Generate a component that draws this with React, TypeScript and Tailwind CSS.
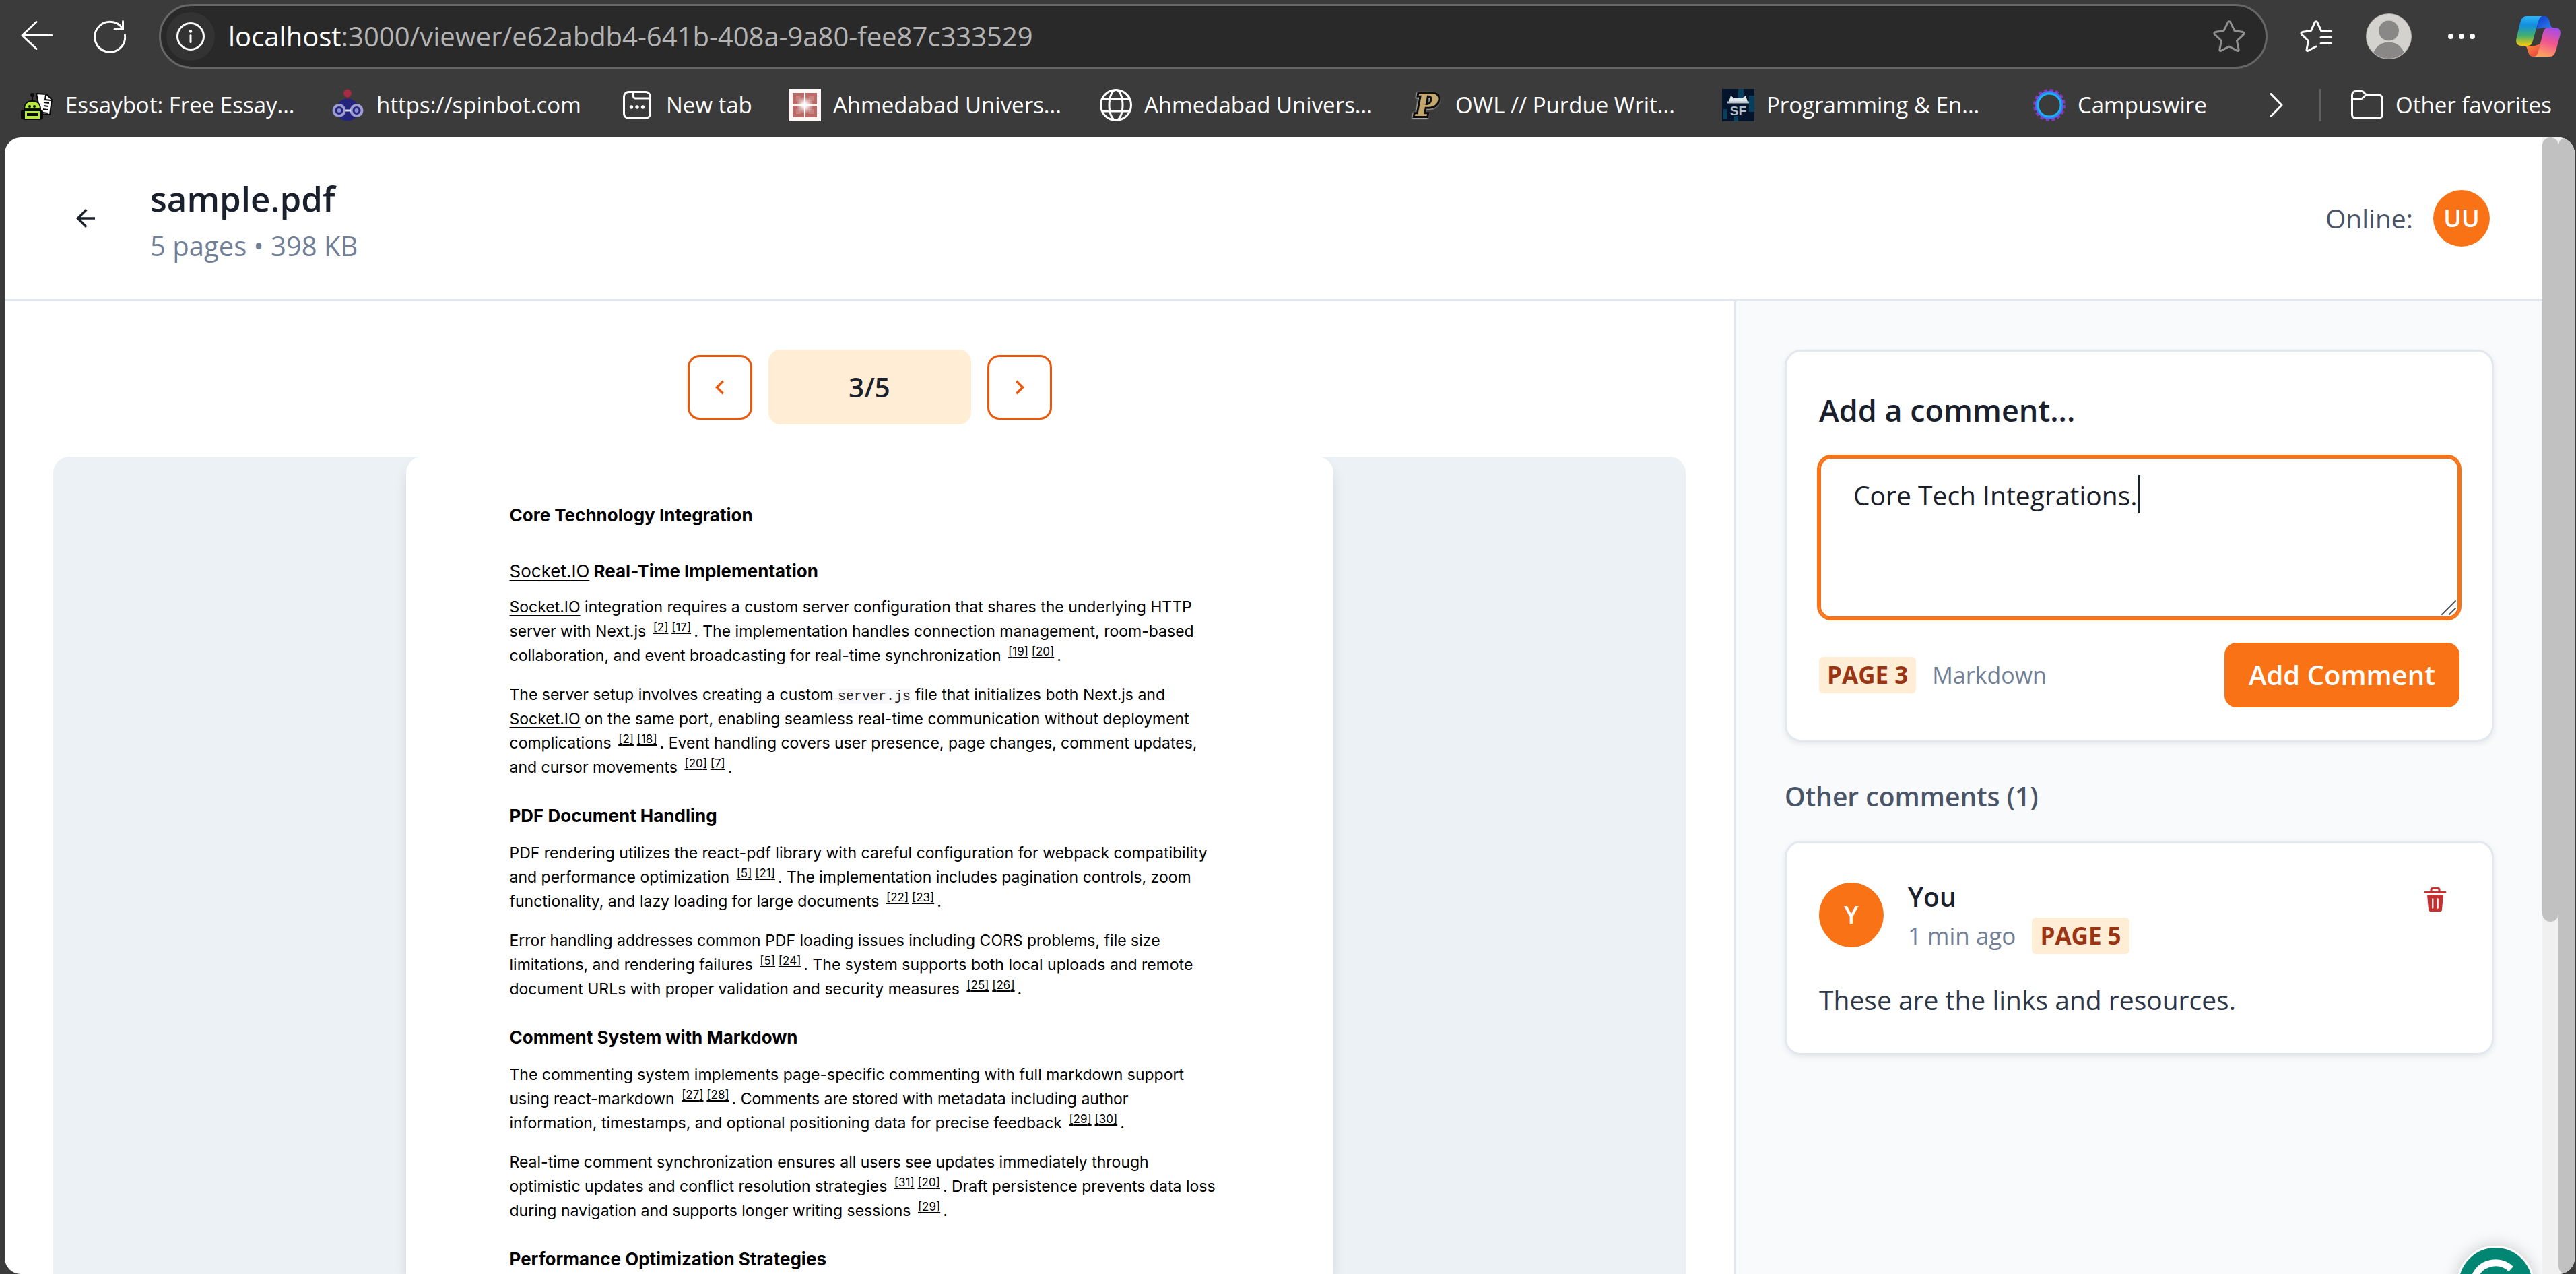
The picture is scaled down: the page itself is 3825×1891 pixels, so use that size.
import type { ReactNode } from "react";
import { MdArrowBack, MdChevronLeft, MdChevronRight } from "react-icons/md";

/* ---------- Browser toolbar icons ---------- */

const BackArrow = () => (
  <svg className="size-12" viewBox="0 0 48 48" fill="none" stroke="#fff" strokeWidth="3" strokeLinecap="round" strokeLinejoin="round">
    <path d="M46 22.5H2M23 2.5 2 22.5l21 20" />
  </svg>
);

const Reload = () => (
  <svg className="size-12" viewBox="0 0 48 48" fill="none" stroke="#fff" strokeWidth="3" strokeLinecap="round" strokeLinejoin="round">
    <path d="M46.500 22A22.500 22.500 0 1 1 43 12.500M43.500 1.500v12H31" />
  </svg>
);

const InfoIcon = () => (
  <svg className="size-[42px]" viewBox="0 0 42 42" fill="none" stroke="#fff" strokeWidth="3" strokeLinecap="round">
    <circle cx="21" cy="21" r="19.500" />
    <path d="M21 19.500v10" />
    <circle cx="21" cy="13.500" r="2.200" fill="#fff" stroke="none" />
  </svg>
);

const Star = () => (
  <svg className="size-12" viewBox="0 0 48 48" fill="none" stroke="#8f8f8f" strokeWidth="3" strokeLinejoin="round">
    <path d="M22.300 2.800a2 2 0 0 1 3.400 0l6.300 12.800 12.600 2a1.900 1.900 0 0 1 1 3.200L35.500 30.500l2.700 13.200a1.500 1.500 0 0 1-2.200 1.600L24 39l-12 6.300a1.500 1.500 0 0 1-2.200-1.600l2.700-13.200L2.400 20.800a1.900 1.900 0 0 1 1-3.200l12.600-2z" />
  </svg>
);

const FavoritesList = () => (
  <svg className="size-12" viewBox="0 0 48 48" fill="none" stroke="#fff" strokeWidth="3" strokeLinecap="round" strokeLinejoin="round">
    <path d="M46.500 16.500H32L25.700 2.800a2 2 0 0 0-3.400 0L16.500 15.600l-13 2a1.900 1.900 0 0 0-1 3.200L12.500 30.500 10 43.700a1.500 1.500 0 0 0 2.200 1.600L24 39M31 25.500h15.500M31 34.500h15.500" />
  </svg>
);

const Profile = () => (
  <svg className="size-[68px]" viewBox="0 0 68 68">
    <clipPath id="profile-clip">
      <circle cx="34" cy="34" r="33" />
    </clipPath>
    <circle cx="34" cy="34" r="34" fill="#b9b7b5" />
    <circle cx="34" cy="34" r="33" fill="#d4d2cf" />
    <circle cx="34" cy="25.500" r="15" fill="#8a8886" />
    <circle cx="34" cy="67" r="24.500" fill="#8a8886" clipPath="url(#profile-clip)" />
  </svg>
);

const Dots = () => (
  <svg className="h-3 w-10" viewBox="0 0 40 12" fill="#fff">
    <circle cx="4" cy="6" r="4" />
    <circle cx="20" cy="6" r="4" />
    <circle cx="36" cy="6" r="4" />
  </svg>
);

const Copilot = () => (
  <svg className="h-[60px] w-[66px]" viewBox="0 0 66 60">
    <defs>
      <linearGradient id="cp-a" x1="0" y1="0" x2="0" y2="1">
        <stop offset="0" stopColor="#2fb4f5" />
        <stop offset=".3" stopColor="#118ee0" />
        <stop offset=".65" stopColor="#3fae72" />
        <stop offset="1" stopColor="#fbcb05" />
      </linearGradient>
      <linearGradient id="cp-b" x1="0" y1="0" x2="1" y2="1">
        <stop offset="0" stopColor="#1138c9" />
        <stop offset="1" stopColor="#2d86f0" />
      </linearGradient>
      <linearGradient id="cp-c" x1=".7" y1="0" x2=".4" y2="1">
        <stop offset="0" stopColor="#a24dea" />
        <stop offset=".5" stopColor="#f1558f" />
        <stop offset="1" stopColor="#fda45c" />
      </linearGradient>
      <linearGradient id="cp-d" x1="0" y1="0" x2="1" y2="1">
        <stop offset="0" stopColor="#fd9a3e" />
        <stop offset="1" stopColor="#e8383f" />
      </linearGradient>
    </defs>
    <path d="M34 0h8c4 0 6 2 7.500 7l2 7c.7 2 2 3 4 3H40l-9 2z" fill="url(#cp-b)" />
    <path d="M32 60h-7c-4 0-6-3-7-7l-2-6c-.7-2-2-3-4-3h16l8-3z" fill="url(#cp-d)" />
    <path d="M16 0h24c-4 0-5.500 3-7 8l-8 28c-1.500 5-3 8-8 8H8c-6 0-9-4-7.500-11L6 10c2-7 5-10 10-10z" fill="url(#cp-a)" />
    <path d="M50 60H26c4 0 5.500-3 7-8l7-27c1.500-5 3-8 8-8h10c6 0 9 4 7.500 11l-6 22c-2 7-4.500 10-9.500 10z" fill="url(#cp-c)" />
  </svg>
);

/* ---------- Bookmark icons ---------- */

const Essaybot = () => (
  <svg className="size-12" viewBox="0 0 48 48">
    <path d="M23 7l15 1 8 8-3 22-14-1z" fill="#fff" stroke="#0b0b0b" strokeWidth="2" />
    <path d="M37 9l-1 7 9 1M34 20l8 1M34 25l7 1M33 30l7 1M33 35l7 1" stroke="#0b0b0b" strokeWidth="2" fill="none" />
    <path d="M17 10v9" stroke="#0b0b0b" strokeWidth="2" />
    <circle cx="17" cy="9" r="3" fill="#0b0b0b" />
    <rect x="0" y="31" width="7" height="14" rx="3" fill="#0b0b0b" />
    <rect x="27" y="31" width="6" height="14" rx="3" fill="#0b0b0b" />
    <path d="M5 30c0-8 5-12 12-12s12 4 12 12z" fill="#b6ea3a" stroke="#0b0b0b" strokeWidth="2" />
    <path d="M5 32h24v13H5z" fill="#b6ea3a" stroke="#0b0b0b" strokeWidth="2" />
    <path d="M9 38h16" stroke="#0b0b0b" strokeWidth="4" />
    <circle cx="13" cy="26" r="2" fill="#0b0b0b" />
    <circle cx="20" cy="26" r="2" fill="#0b0b0b" />
  </svg>
);

const Spinbot = () => (
  <svg className="size-12" viewBox="0 0 48 48">
    <path d="M23 10v9" stroke="#7c2438" strokeWidth="3" />
    <circle cx="23" cy="6.500" r="6" fill="#a32b42" />
    <circle cx="23" cy="31" r="16.500" fill="#24247c" />
    <circle cx="10.500" cy="32" r="8" fill="#24247c" stroke="#9d9dd2" strokeWidth="4" />
    <circle cx="36.500" cy="32" r="8" fill="#24247c" stroke="#9d9dd2" strokeWidth="4" />
    <path d="M19 32h9" stroke="#d6d6f2" strokeWidth="3" />
    <circle cx="10.500" cy="32" r="3" fill="#8c8cd0" />
    <circle cx="36.500" cy="32" r="3" fill="#8c8cd0" />
  </svg>
);

const NewTab = () => (
  <svg className="h-12 w-[46px]" viewBox="0 0 46 48" fill="none" stroke="#fff" strokeWidth="3">
    <rect x="1.500" y="4.500" width="39" height="39" rx="7" />
    <path d="M15.500 5v6a3 3 0 0 0 3 3H41" />
    <g fill="#fff" stroke="none">
      <circle cx="12.500" cy="27" r="2.700" />
      <circle cx="21" cy="27" r="2.700" />
      <circle cx="29.500" cy="27" r="2.700" />
    </g>
  </svg>
);

const RedMosaic = () => (
  <svg className="size-12" viewBox="0 0 48 48">
    <defs>
      <radialGradient id="glow">
        <stop offset="0" stopColor="#fff" />
        <stop offset=".35" stopColor="#fff" stopOpacity=".8" />
        <stop offset="1" stopColor="#fff" stopOpacity="0" />
      </radialGradient>
    </defs>
    <path d="M0 0h48v48H0z" fill="#fdf8f7" />
    <path d="M6 6h17v17H6zM25 6h17v17H25zM6 25h17v17H6zM25 25h17v17H25z" fill="#b96a67" />
    <path d="M11 11h7v7h-7zM30 11h7v7h-7zM11 30h7v7h-7zM30 30h7v7h-7z" fill="#c98481" />
    <circle cx="24" cy="24" r="13" fill="url(#glow)" />
  </svg>
);

const Globe = () => (
  <svg className="size-12" viewBox="0 0 48 48" fill="none" stroke="#fff" strokeWidth="3">
    <circle cx="24" cy="24" r="22.500" />
    <ellipse cx="24" cy="24" rx="10" ry="22.500" />
    <path d="M3 15.500h42M3 33h42" />
  </svg>
);

const Purdue = () => (
  <svg className="size-12 overflow-visible drop-shadow-[-1px_1px_1px_#ddd]" viewBox="0 0 48 48">
    <text x="7" y="40" fontFamily="DejaVu Serif, serif" fontWeight="700" fontStyle="italic" fontSize="44" fill="#c2a66c" stroke="#0d0d0d" strokeWidth="6" paintOrder="stroke">P</text>
  </svg>
);

const SfLogo = () => (
  <svg className="size-12" viewBox="0 0 48 48">
    <path d="M0 0h48v48H0z" fill="#03142c" />
    <path d="M24 0h8v16h-8zM40 10h8v24h-8zM2 30h5v14H2zM18 40h6v8h-6z" fill="#06405f" />
    <path d="M10 19l3-9 5 4h12l5-4 3 9z" fill="#dfe6ea" />
    <path d="M8 20h32" stroke="#b8c2c9" strokeWidth="3" />
    <text x="24" y="39" textAnchor="middle" fontFamily="Liberation Sans, sans-serif" fontWeight="700" fontSize="19" fill="#b3bcc6">SF</text>
  </svg>
);

const Campuswire = () => (
  <svg className="size-12" viewBox="0 0 48 48" fill="none">
    <circle cx="24" cy="24" r="21.500" stroke="#8a36b8" strokeWidth="5" strokeDasharray="5 3.440" />
    <circle cx="24" cy="24" r="19" stroke="#4b6cf5" strokeWidth="4" />
    <circle cx="24" cy="24" r="17" stroke="#17b4f3" strokeWidth="3" />
  </svg>
);

const Folder = () => (
  <svg className="size-12" viewBox="0 0 48 48" fill="none" stroke="#fff" strokeWidth="3" strokeLinejoin="round">
    <path d="M1.500 15.500V9a5.500 5.500 0 0 1 5.500-5.500h8.500c1.200 0 2.300.500 3.200 1.400L22.500 9H41a5.500 5.500 0 0 1 5.500 5.500V38a5.500 5.500 0 0 1-5.500 5.500H7A5.500 5.500 0 0 1 1.500 38zM1.500 14.500H16L22 9" />
  </svg>
);

const bookmarks: { icon: ReactNode; label: string; width: string }[] = [
  { icon: <Essaybot />, label: "Essaybot: Free Essay...", width: "w-[345px]" },
  { icon: <Spinbot />, label: "https://spinbot.com", width: "w-[315px]" },
  { icon: <NewTab />, label: "New tab", width: "w-[131px]" },
  { icon: <RedMosaic />, label: "Ahmedabad Univers...", width: "w-[345px]" },
  { icon: <Globe />, label: "Ahmedabad Univers...", width: "w-[345px]" },
  { icon: <Purdue />, label: "OWL // Purdue Writ...", width: "w-[345px]" },
  { icon: <SfLogo />, label: "Programming & En...", width: "w-[345px]" },
  { icon: <Campuswire />, label: "Campuswire", width: "w-[198px]" },
];

function BrowserChrome() {
  return (
    <div className="shrink-0 text-white">
      <div className="flex h-[108px] items-center pr-[23px] pl-[31px]">
        <button type="button" aria-label="Back" className="mr-[60px]"><BackArrow /></button>
        <button type="button" aria-label="Refresh" className="mr-[49px]"><Reload /></button>
        <div className="flex h-24 min-w-0 flex-1 items-center rounded-full border-3 border-[#666] bg-[#292929] pr-[30px] pl-2">
          <button type="button" aria-label="Site information" className="mr-5 flex size-[72px] shrink-0 items-center justify-center rounded-full bg-[#333]">
            <InfoIcon />
          </button>
          <p className="min-w-0 flex-1 text-[40px] whitespace-nowrap text-[#b4b4b4]">
            <span className="text-white">localhost</span>:3000/viewer/e62abdb4-641b-408a-9a80-fee87c333529
          </p>
          <button type="button" aria-label="Add to favorites"><Star /></button>
        </div>
        <button type="button" aria-label="Favorites" className="ml-12"><FavoritesList /></button>
        <button type="button" aria-label="Profile" className="ml-[50px]"><Profile /></button>
        <button type="button" aria-label="Settings and more" className="ml-[54px]"><Dots /></button>
        <button type="button" aria-label="Copilot" className="ml-[61px]"><Copilot /></button>
      </div>
      <nav className="flex h-24 items-center pr-8 pl-[31px] text-[33px] whitespace-nowrap">
        <div className="flex items-center gap-[51px]">
          {bookmarks.map((b, i) => (
            <a key={i} href="#" className="flex items-center gap-[18px]">
              {b.icon}
              <span className={b.width}>{b.label}</span>
            </a>
          ))}
        </div>
        <button type="button" aria-label="More favorites" className="ml-auto">
          <svg className="h-9 w-5" viewBox="0 0 20 36" fill="none" stroke="#fff" strokeWidth="3" strokeLinecap="round" strokeLinejoin="round">
            <path d="M2 1.500 18 18 2 34.500" />
          </svg>
        </button>
        <span className="mr-[44px] ml-[54px] h-12 w-[3px] bg-[#5f5f5f]" />
        <a href="#" className="flex items-center gap-[18px]">
          <Folder />
          <span className="w-[236px]">Other favorites</span>
        </a>
      </nav>
    </div>
  );
}

/* ---------- PDF page ---------- */

const Cite = ({ n }: { n: number[] }) => (
  <sup className="mx-1 text-[17px]">
    {n.map((v, i) => (
      <span key={v}>
        {i > 0 && " "}
        <a href="#" className="underline decoration-2 underline-offset-2">[{v}]</a>
      </span>
    ))}
  </sup>
);

const SocketLink = () => (
  <a href="#" className="font-normal underline decoration-2 underline-offset-4">Socket.IO</a>
);

const PdfHeading = ({ children }: { children: ReactNode }) => (
  <h2 className="mt-9 text-[26px] leading-9 font-bold">{children}</h2>
);

function PdfPage() {
  return (
    <article className="mx-auto h-full w-[1377px] rounded-t-3xl bg-white pt-[69px] pl-[154px] font-[Inter,sans-serif] text-[23px] leading-9 whitespace-nowrap text-black shadow-[0_12px_18px_rgba(0,0,0,0.1)]">
      <h1 className="text-[26px] leading-9 font-bold">Core Technology Integration</h1>
      <h2 className="mt-[47px] text-[26px] leading-9 font-bold"><SocketLink /> Real-Time Implementation</h2>
      <p className="mt-[17px]">
        <SocketLink /> integration requires a custom server configuration that shares the underlying HTTP<br />
        server with Next.js <Cite n={[2, 17]} />. The implementation handles connection management, room-based<br />
        collaboration, and event broadcasting for real-time synchronization <Cite n={[19, 20]} />.
      </p>
      <p className="mt-[22px]">
        The server setup involves creating a custom <code className="bg-[#f8f8fb] font-['Liberation_Mono',monospace] text-[20px] leading-none text-[#222]">server.js</code> file that initializes both Next.js and<br />
        <SocketLink /> on the same port, enabling seamless real-time communication without deployment<br />
        complications <Cite n={[2, 18]} />. Event handling covers user presence, page changes, comment updates,<br />
        and cursor movements <Cite n={[20, 7]} />.
      </p>
      <PdfHeading>PDF Document Handling</PdfHeading>
      <p className="mt-[19px]">
        PDF rendering utilizes the react-pdf library with careful configuration for webpack compatibility<br />
        and performance optimization <Cite n={[5, 21]} />. The implementation includes pagination controls, zoom<br />
        functionality, and lazy loading for large documents <Cite n={[22, 23]} />.
      </p>
      <p className="mt-[22px]">
        Error handling addresses common PDF loading issues including CORS problems, file size<br />
        limitations, and rendering failures <Cite n={[5, 24]} />. The system supports both local uploads and remote<br />
        document URLs with proper validation and security measures <Cite n={[25, 26]} />.
      </p>
      <PdfHeading>Comment System with Markdown</PdfHeading>
      <p className="mt-[19px]">
        The commenting system implements page-specific commenting with full markdown support<br />
        using react-markdown <Cite n={[27, 28]} />. Comments are stored with metadata including author<br />
        information, timestamps, and optional positioning data for precise feedback <Cite n={[29, 30]} />.
      </p>
      <p className="mt-[22px]">
        Real-time comment synchronization ensures all users see updates immediately through<br />
        optimistic updates and conflict resolution strategies <Cite n={[31, 20]} />. Draft persistence prevents data loss<br />
        during navigation and supports longer writing sessions <Cite n={[29]} />.
      </p>
      <PdfHeading>Performance Optimization Strategies</PdfHeading>
    </article>
  );
}

function Viewer() {
  const navButton = "flex size-24 items-center justify-center rounded-[18px] border-3 border-[#ea580c] text-[#ea580c]";
  return (
    <main className="flex min-h-0 min-w-0 flex-1 flex-col px-[72px] pt-[72px]">
      <div className="flex items-center justify-center gap-6">
        <button type="button" aria-label="Previous page" className={navButton}><MdChevronLeft className="size-[42px]" /></button>
        <div className="flex h-[111px] w-[301px] items-center justify-center rounded-[18px] bg-[#ffedd5] text-[40px] font-semibold text-[#1a202c]">3/5</div>
        <button type="button" aria-label="Next page" className={navButton}><MdChevronRight className="size-[42px]" /></button>
      </div>
      <div className="mt-12 min-h-0 flex-1 overflow-hidden rounded-t-3xl bg-[#ebf1f5]">
        <PdfPage />
      </div>
    </main>
  );
}

/* ---------- Comments ---------- */

const TrashIcon = () => (
  <svg className="size-9" viewBox="0 0 24 24" fill="currentColor">
    <path d="M19.452 7.500H4.547a.5.5 0 00-.5.545l1.287 14.136A2 2 0 007.326 24h9.347a2 2 0 001.992-1.819L19.950 8.045a.5.5 0 00-.129-.382.5.5 0 00-.369-.163zm-9.200 13a.75.75 0 01-1.500 0v-9a.75.75 0 011.500 0zm5 0a.75.75 0 01-1.500 0v-9a.75.75 0 011.500 0zM22 4h-4.750a.25.25 0 01-.25-.25V2.500A2.500 2.500 0 0014.500 0h-5A2.500 2.500 0 007 2.500v1.250a.25.25 0 01-.25.25H2a1 1 0 000 2h20a1 1 0 000-2zM9 3.750V2.500a.5.5 0 01.5-.5h5a.5.5 0 01.5.5v1.250a.25.25 0 01-.25.25h-5.500A.25.25 0 019 3.750z" />
  </svg>
);

const PageBadge = ({ page }: { page: number }) => (
  <span className="flex h-[54px] items-center rounded-md bg-[#ffedd5] px-3 text-[35px] font-bold text-[#9a3412]">PAGE {page}</span>
);

const Card = ({ children }: { children: ReactNode }) => (
  <section className="rounded-3xl border-3 border-[#e2e8f0] bg-white p-12 shadow-[0_3px_9px_rgba(0,0,0,0.08)]">{children}</section>
);

function Comments() {
  return (
    <aside className="w-[1200px] shrink-0 border-l-3 border-[#e2e8f0] bg-[#f9fafc] p-[72px]">
      <Card>
        <label htmlFor="comment" className="block text-[45px] leading-[78px] font-semibold text-[#1a202c]">Add a comment...</label>
        <div className="relative mt-[30px]">
          <textarea
            id="comment"
            defaultValue="Core Tech Integrations."
            className="block h-[240px] w-full resize-none rounded-[18px] border-3 border-[#f97316] px-12 py-6 text-[39px] leading-[60px] text-[#1a202c] ring-3 ring-[#f97316] outline-none"
          />
          <span className="absolute top-[27px] left-[474px] h-[57px] w-[3px] bg-[#1a202c]" />
          <svg className="absolute right-1 bottom-1 size-6" viewBox="0 0 24 24" stroke="#555" strokeWidth="2" strokeLinecap="round">
            <path d="M2 22 22 2M13 22l9-9" />
          </svg>
        </div>
        <div className="mt-9 flex items-center gap-6">
          <PageBadge page={3} />
          <span className="text-[34px] text-[#718096]">Markdown</span>
          <button type="button" className="ml-auto h-24 rounded-[18px] bg-[#f97316] px-9 text-[40px] font-semibold text-white">Add Comment</button>
        </div>
      </Card>
      <h2 className="mt-12 mb-[33px] text-[39px] leading-[66px] font-semibold text-[#4a5568]">Other comments (1)</h2>
      <Card>
        <div className="flex items-start">
          <div className="flex flex-1 items-center gap-9">
            <div className="flex size-24 items-center justify-center rounded-full bg-[#f97316] text-[36px] font-semibold text-white">Y</div>
            <div>
              <p className="text-[39px] leading-[63px] font-semibold text-[#1a202c]">You</p>
              <div className="flex items-center gap-6">
                <span className="text-[35px] text-[#718096]">1 min ago</span>
                <PageBadge page={5} />
              </div>
            </div>
          </div>
          <button type="button" aria-label="Delete comment" className="flex size-[72px] items-center justify-center text-[#c53030]"><TrashIcon /></button>
        </div>
        <p className="mt-9 text-[39px] leading-[63px] text-[#2d3748]">These are the links and resources.</p>
      </Card>
    </aside>
  );
}

const GrammarBadge = () => (
  <button type="button" aria-label="Writing assistant" className="absolute right-3 -bottom-[73px] size-[115px] rounded-full border-3 border-white bg-[#008672] shadow-[0_0_24px_rgba(0,0,0,0.2)]">
    <svg className="size-full" viewBox="0 0 109 109" fill="none" stroke="#fff" strokeWidth="10">
      <path d="M77.500 31.500A33.500 33.500 0 1 0 88 56H62" />
    </svg>
  </button>
);

export default function App() {
  return (
    <div className="flex h-screen flex-col overflow-hidden bg-[#3b3b3b] font-['Open_Sans',sans-serif]">
      <BrowserChrome />
      <div className="mr-[2px] ml-[7px] flex min-h-0 flex-1 overflow-hidden rounded-3xl bg-white">
        <div className="relative flex min-w-0 flex-1 flex-col overflow-hidden">
          <header className="flex h-[243px] shrink-0 items-center border-b-3 border-[#e2e8f0] px-[72px]">
            <button type="button" aria-label="Back to documents" className="mr-12 flex size-24 items-center justify-center text-[#1a202c]">
              <MdArrowBack className="size-[42px]" />
            </button>
            <div>
              <h1 className="text-[51px] leading-[82px] font-semibold text-[#1a202c]">sample.pdf</h1>
              <p className="text-[40px] leading-[60px] text-[#718096]">5 pages • 398 KB</p>
            </div>
            <p className="mr-[30px] ml-auto text-[39px] text-[#4a5568]">Online:</p>
            <div className="mr-[6px] flex size-[84px] items-center justify-center rounded-full bg-[#f97316] text-[36px] font-semibold text-white">UU</div>
          </header>
          <div className="flex min-h-0 flex-1">
            <Viewer />
            <Comments />
          </div>
          <GrammarBadge />
        </div>
        <div className="w-6 shrink-0 bg-[#f0f0f0]">
          <div className="h-[69%] rounded-full bg-[#c1c1c1]" />
        </div>
        <div className="w-6 shrink-0 bg-[#f0f0f0]">
          <div className="h-full rounded-full bg-[#c1c1c1]" />
        </div>
      </div>
    </div>
  );
}
